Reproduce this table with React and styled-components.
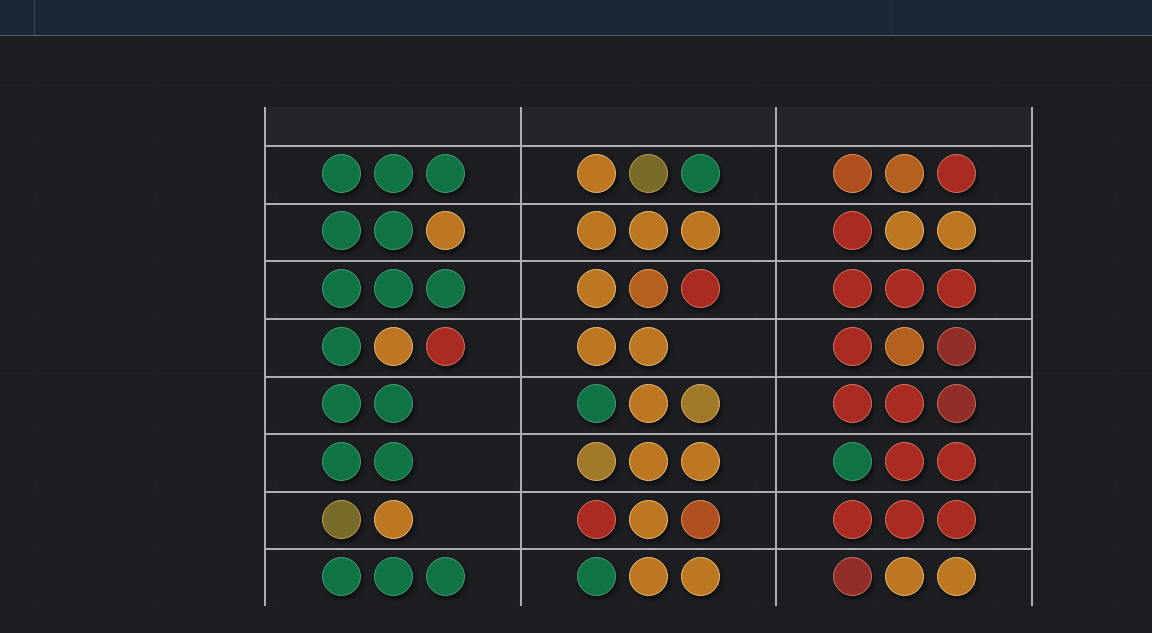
import React from 'react';
import styled, { createGlobalStyle } from 'styled-components';

const GlobalStyle = createGlobalStyle`
  html, body {
    margin: 0;
    padding: 0;
    background: #1c1e22;
    font-family: "Liberation Sans", Arial, sans-serif;
  }
`;

const colors = {
  g: { fill: '#107444', ring: '#4aa176' },
  o: { fill: '#bd7722', ring: '#f0c27a' },
  l: { fill: '#776c2a', ring: '#cca052' },
  y: { fill: '#a07a28', ring: '#e6b66a' },
  r: { fill: '#aa2b21', ring: '#de7866' },
  d: { fill: '#922e28', ring: '#cf7366' },
  m: { fill: '#b0501f', ring: '#ea9862' },
  n: { fill: '#b4601f', ring: '#eea866' },
};

// one string per row, one chunk per column
const rows = [
  ['ggg', 'olg', 'mnr'],
  ['ggo', 'ooo', 'roo'],
  ['ggg', 'onr', 'rrr'],
  ['gor', 'oo', 'rnd'],
  ['gg', 'goy', 'rrd'],
  ['gg', 'yoo', 'grr'],
  ['lo', 'rom', 'rrr'],
  ['ggg', 'goo', 'doo'],
];

const Page = styled.div`
  min-height: 633px;
  background-color: #1c1e22;
  background-image:
    linear-gradient(90deg, rgba(120, 150, 160, 0.04) 1px, transparent 1px),
    linear-gradient(0deg, rgba(120, 150, 160, 0.035) 1px, transparent 1px);
  background-size: 120px 100%, 100% 57.6px;
  background-position: 35px 0, 0 28px;
`;

const TopBar = styled.div`
  height: 35px;
  background-color: #1b2734;
  background-image:
    linear-gradient(90deg, transparent 34px, rgba(150, 190, 200, 0.22) 34px, rgba(150, 190, 200, 0.22) 35px, transparent 35px),
    linear-gradient(90deg, transparent 891px, rgba(150, 190, 200, 0.08) 891px, rgba(150, 190, 200, 0.08) 892px, transparent 892px);
  border-bottom: 1px solid #4a666e;
`;

const Content = styled.div`
  padding: 71px 0 0 264px;
`;

const Table = styled.div`
  display: grid;
  width: 769px;
  grid-template-columns: 256px 255px 258px;
  grid-template-rows: 38px repeat(8, 57.625px);
`;

const Cell = styled.div`
  box-sizing: border-box;
  border-left: 2px solid #acaeb2;
  border-right: ${p => (p.$last ? '2px solid #acaeb2' : 'none')};
  border-top: ${p => (p.$head ? 'none' : '2px solid #acaeb2')};
  background: ${p => (p.$head ? '#232529' : 'transparent')};
  display: flex;
  align-items: center;
  justify-content: center;
  padding-bottom: 3px;
`;

const Dots = styled.div`
  display: grid;
  grid-template-columns: repeat(3, 39px);
  gap: 13px;
  margin-right: ${p => (p.$last ? '2px' : '0')};
`;

const Dot = styled.div`
  box-sizing: border-box;
  width: 39px;
  height: 39px;
  border-radius: 50%;
  background: ${p => colors[p.$c].fill};
  border: 1.5px solid ${p => colors[p.$c].ring};
  box-shadow: 2px 3px 4px rgba(0, 0, 0, 0.55);
`;

export default function App() {
  return (
    <Page>
      <GlobalStyle />
      <TopBar />
      <Content>
        <Table>
          {[0, 1, 2].map(i => (
            <Cell key={'h' + i} $head $last={i === 2} />
          ))}
          {rows.map((row, r) =>
            row.map((set, c) => (
              <Cell key={r + '-' + c} $last={c === 2}>
                <Dots>
                  {set.split('').map((k, i) => (
                    <Dot key={i} $c={k} />
                  ))}
                </Dots>
              </Cell>
            ))
          )}
        </Table>
      </Content>
    </Page>
  );
}
